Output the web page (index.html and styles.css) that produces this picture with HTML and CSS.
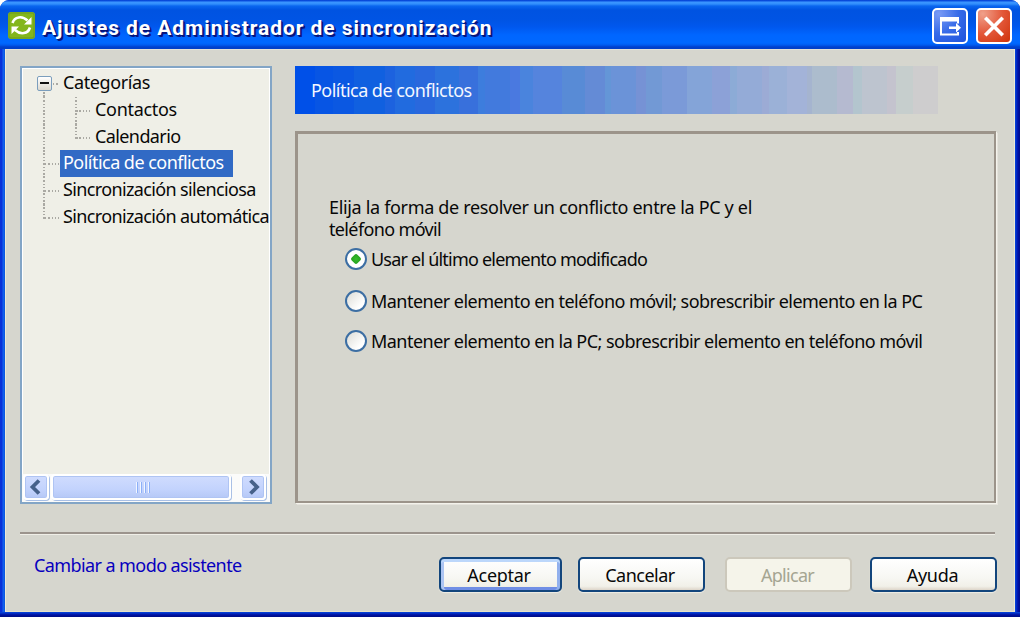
FILE: index.html
```html
<!DOCTYPE html>
<html lang="es">
<head>
<meta charset="utf-8">
<title>Ajustes de Administrador de sincronización</title>
<link rel="stylesheet" href="styles.css">
</head>
<body>
<div class="window">
  <header class="titlebar">
    <svg class="app-icon" width="27" height="27" viewBox="0 0 27 27">
      <rect width="27" height="27" rx="3" fill="#83b61c"/>
      <rect x="1" y="1" width="25" height="25" rx="2" fill="none" stroke="#6c9b20"/>
      <g fill="none" stroke="#fff" stroke-width="2.600"><path d="M4.500 11C6.500 4.500 14 3.500 19.500 8.500"/><path d="M22 15.500C20 22 12.500 23 7 18"/></g>
      <path d="M23.500 5v7.500H16zM3.500 22v-7.500H11z" fill="#fff"/>
    </svg>
    <h1 class="title">Ajustes de Administrador de sincronización</h1>
    <button class="caption-button mode" aria-label="Cambiar modo">
      <svg width="36" height="37" viewBox="0 0 36 37">
        <path d="M26 15.500V10H9v16.500h17V24" fill="none" stroke="#fff" stroke-width="2"/>
        <path d="M8 9h19v4.500H8z" fill="#fff"/>
        <path d="M17 18.500h7V15l5 4.700-5 4.700v-3.500h-7z" fill="#fff"/>
      </svg>
    </button>
    <button class="caption-button close" aria-label="Cerrar">
      <svg width="36" height="37" viewBox="0 0 36 37"><path d="M10.500 11l15 15M25.500 11l-15 15" stroke="#fff" stroke-width="3.600" stroke-linecap="square"/></svg>
    </button>
  </header>
  <main class="client">
    <div class="panes">
      <nav class="tree">
        <ul class="nodes">
          <li class="node root"><span class="toggle"></span><span class="label t-categorias">Categorías</span></li>
          <li class="node child"><span class="label t-contactos">Contactos</span></li>
          <li class="node child last"><span class="label t-calendario">Calendario</span></li>
          <li class="node"><span class="label selected t-politica">Política de conflictos</span></li>
          <li class="node"><span class="label t-silenciosa">Sincronización silenciosa</span></li>
          <li class="node last"><span class="label t-automatica">Sincronización automática</span></li>
        </ul>
        <div class="scrollbar">
          <span class="arrow"><svg width="26" height="26" viewBox="0 0 26 26"><path d="M16 6.500L9.500 13l6.500 6.500" fill="none" stroke="#46618a" stroke-width="3.800"/></svg></span>
          <span class="thumb"><i></i><i></i><i></i><i></i></span>
          <span class="arrow right"><svg width="26" height="26" viewBox="0 0 26 26"><path d="M10.500 6.500L17 13l-6.500 6.500" fill="none" stroke="#46618a" stroke-width="3.800"/></svg></span>
        </div>
      </nav>
      <section class="content">
        <h2 class="banner"><span class="t-politica">Política de conflictos</span></h2>
        <div class="frame">
          <p class="prompt"><span class="t-prompt">Elija la forma de resolver un conflicto entre la PC y el</span><br><span class="t-movil">teléfono móvil</span></p>
          <div class="options">
            <label class="option first"><span class="radio checked"></span><span class="t-usar">Usar el último elemento modificado</span></label>
            <label class="option second"><span class="radio"></span><span class="t-keep">Mantener elemento en teléfono móvil; sobrescribir elemento en la PC</span></label>
            <label class="option"><span class="radio"></span><span class="t-keep">Mantener elemento en la PC; sobrescribir elemento en teléfono móvil</span></label>
          </div>
        </div>
      </section>
    </div>
    <footer class="footer">
      <a class="link">Cambiar a modo asistente</a>
      <div class="buttons">
        <button class="button default">Aceptar</button>
        <button class="button cancel">Cancelar</button>
        <button class="button disabled" disabled>Aplicar</button>
        <button class="button help">Ayuda</button>
      </div>
    </footer>
  </main>
</div>
</body>
</html>
```
FILE: styles.css
```css
* { box-sizing: border-box; }
body { margin: 0; background: #fff; font: 18px/22px "Noto Sans", sans-serif; color: #080808; overflow: hidden; }
button { font: inherit; padding: 0; margin: 0; }
h1, h2, p, ul { margin: 0; padding: 0; }

.window {
  width: 1020px; height: 617px; display: flex; flex-direction: column;
  padding: 0 5px 5px; border-radius: 9px 9px 0 0; overflow: hidden;
  background:
    linear-gradient(to bottom, #0648df, #0010a0 60%, #000f82) bottom / 100% 5px no-repeat,
    linear-gradient(to right, #0831d9 0 2px, #1663f0 3px, #0855dd 5px) left / 5px 100% no-repeat,
    linear-gradient(to right, #0647df, #0010a8 60%, #000e88) right / 5px 100% no-repeat,
    #0054e3;
}
.titlebar {
  height: 49px; flex: none; display: flex; align-items: flex-start; margin: 0 -5px; padding: 8px 8px 0 8px;
  background: linear-gradient(to bottom, #0744d4 0, #0a4fe0 1px, #3c96ff 2px, #318efc 4px, #0a66ef 6px, #0053e1 10px, #0054e4 20px, #0058ee 27px, #0066ff 35px, #0068ff 43px, #005bf0 45px, #0140cc 47px, #0140c8 49px);
}
.app-icon { margin-top: 4px; }
.title {
  flex: 1; margin: 8px 0 0 7px; font: bold 21px/24px Roboto, sans-serif; letter-spacing: .94px;
  color: #fff; text-shadow: 1px 1px 1px #00147c, 2px 2px 0 #0a1883; white-space: nowrap;
}
.caption-button { width: 36px; height: 36px; border: 2px solid #fff; border-radius: 5px; display: flex; align-items: center; justify-content: center; }
.caption-button svg { flex: none; }
.mode { background: radial-gradient(circle at 15% 12%, #7a9bf5, #376be8 50%, #1d52dc); margin-right: 8px; }
.close { background: radial-gradient(circle at 15% 12%, #f0a08a, #e3583a 50%, #cf3209); }

.client { flex: 1; background: #d6d6ce; border: 1px solid #ece9d8; border-top-color: #e4e2d8; border-bottom-color: #e6e2c8; padding: 16px 18px 0 14px; }
.panes { display: flex; gap: 23px; height: 439px; }
.tree { width: 252px; height: 438px; border: 2px solid #83a5c6; background: #efefe7; box-shadow: inset 0 0 0 1px #fff; display: flex; flex-direction: column; justify-content: space-between; }
.nodes { list-style: none; padding: 2px 0 0 38px; width: 248px; overflow: hidden; }
.node { height: 26.800px; display: flex; align-items: center; position: relative; white-space: nowrap; }
.node::before { content: ""; position: absolute; left: -17px; top: 0; bottom: 0; width: 2px; background: repeating-linear-gradient(#aaa9a3 0 1.500px, transparent 1.500px 3.300px); }
.node::after { content: ""; position: absolute; left: -15px; width: 14px; top: 13px; height: 2px; background: repeating-linear-gradient(to right, #aaa9a3 0 1.500px, transparent 1.500px 3.300px); }
.node.root::before { top: 22px; }
.node.root::after { left: -7px; width: 6px; }
.node.last:not(.child)::before { bottom: 12px; }
.child { padding-left: 32px; }
.child::after { left: 16px; }
.child .label { position: relative; }
.child .label::before { content: ""; position: absolute; left: -17px; top: 0; bottom: 0; width: 2px; background: repeating-linear-gradient(#aaa9a3 0 1.500px, transparent 1.500px 3.300px); }
.child.last .label::before { bottom: 12px; }
.label { height: 27px; line-height: 25px; padding-left: 3px; }
.selected { width: 173px; background: #316ac5; color: #fff; }
.toggle { position: absolute; z-index: 1; left: -23px; top: 6px; width: 15px; height: 15px; border: 1.500px solid #7b9ebd; border-radius: 2px; background: linear-gradient(#fff, #ddd9ce); }
.toggle::after { content: ""; position: absolute; left: 2px; right: 2px; top: 5px; height: 2px; background: #111; }

.t-categorias { letter-spacing: -.4px; }
.t-contactos { letter-spacing: -.3px; }
.t-calendario { letter-spacing: -.6px; }
.t-politica { letter-spacing: -.53px; }
.t-silenciosa, .t-automatica { letter-spacing: -.64px; }
.t-prompt { letter-spacing: -.33px; }
.t-movil { letter-spacing: -.64px; }
.t-usar { letter-spacing: -.79px; }
.t-keep { letter-spacing: -.53px; }

.scrollbar { height: 28px; display: flex; align-items: center; padding: 0 4px 2px 1px; background: #fbfbfa; }
.arrow, .thumb { height: 26px; border: 2px solid #fff; border-radius: 4px; background: linear-gradient(#d0dcfe, #c3d3fd 60%, #b5c8f6); box-shadow: inset 0 0 0 1px #afc4f3, 1px 1px 0 #a9c0e6; }
.arrow { width: 26px; display: flex; align-items: center; justify-content: center; }
.arrow svg { flex: none; }
.arrow.right { margin-left: auto; }
.thumb { width: 180px; margin-left: 2px; padding-left: 3px; display: flex; gap: 2px; align-items: center; justify-content: center; }
.thumb i { width: 2px; height: 11px; background: linear-gradient(to right, #f2f6ff 50%, #8cb0f8 50%); }

.content { width: 702px; }
.banner {
  width: 643px; height: 48px; display: flex; align-items: center; padding: 0 0 0 16px; color: #f4f7ff; font-size: 18px; font-weight: normal;
  background: linear-gradient(to right, #0050e8 0 20px, #0755e4 20px 38px, #0b58e2 38px 59px, #1060e0 59px 90px, #1c62df 90px 100px, #216bdf 100px 120px, #2968dd 120px 140px, #2c72dd 140px 164px, #3870dc 164px 183px, #3d7ddd 183px 190px, #427add 190px 215px, #4a79e0 215px 225px, #4a84dd 225px 238px, #5584dd 238px 267px, #588bd6 267px 290px, #648bd6 290px 310px, #6496d7 310px 316px, #6b93d8 316px 341px, #7692d5 341px 351px, #7299d5 351px 367px, #7b9ad8 367px 392px, #84a4d8 392px 417px, #8ca1d7 417px 435px, #8cabd6 435px 442px, #94abd7 442px 467px, #9cabd5 467px 474px, #9bb1d7 474px 492px, #a3b3d8 492px 512px, #a5b4cf 512px 517px, #acbccd 517px 542px, #b5bad0 542px 558px, #b3c5ce 558px 567px, #bdc4cf 567px 592px, #c4c3ce 592px 601px, #c6cecd 601px 618px, #cecdce 618px 643px);
}
.frame { height: 372px; margin-top: 17px; border: 2px solid #9c948a; border-top-width: 3px; border-left-width: 3px; box-shadow: 1px 1px 0 #f4f3ec, 2px 2px 0 #e5e3dc; padding: 62px 0 0 31px; }
.prompt { white-space: nowrap; line-height: 22px; }
.options { padding-left: 16px; margin-top: 8px; }
.option { display: flex; align-items: center; height: 22px; gap: 4px; white-space: nowrap; }
.option.first { margin-bottom: 20px; }
.option.second { margin-bottom: 18px; }
.radio { width: 22px; height: 22px; flex: none; border: 2px solid #3c6ea3; border-radius: 50%; background: linear-gradient(135deg, #dcdcd6, #fff 75%); display: flex; align-items: center; justify-content: center; }
.checked { background: #fff; }
.checked::before { content: ""; width: 8px; height: 8px; border-radius: 2px; background: radial-gradient(#37bd2b, #229c1d); transform: rotate(45deg); }

.footer { margin-top: 27px; border-top: 2px solid #9c948d; box-shadow: inset 0 1px 0 #f0efe8; margin-right: 1px; padding: 23px 0 0 14px; display: flex; }
.link { color: #0700be; margin-top: -3px; height: 22px; white-space: nowrap; width: 405px; flex: none; letter-spacing: -.59px; }
.buttons { display: flex; margin-right: -4px; }
.button { flex: none; width: 127px; height: 35px; border: 2px solid #12457c; border-radius: 5px; color: #080808; background: linear-gradient(#fff, #f7f7f3 60%, #f1f0e8 88%, #ddd5c9); box-shadow: 0 1px 1px #efeee6; letter-spacing: -.3px; }
.default { width: 123px; padding-right: 3px; box-shadow: inset 0 3px 0 #bcd7fb, inset 3px 0 0 #adc5f3, inset -3px 0 0 #91b0ed, inset 0 -3px 0 #708ee5, 0 1px 1px #efeee6; margin-right: 16px; }
.cancel { margin-right: 20px; padding-right: 3px; letter-spacing: -.5px; }
.disabled { border-color: #ccc8bb; background: #f5f4ea; color: #a5a592; margin-right: 18px; box-shadow: none; letter-spacing: -.7px; padding-right: 2px; }
.help { padding-right: 2px; }
```
